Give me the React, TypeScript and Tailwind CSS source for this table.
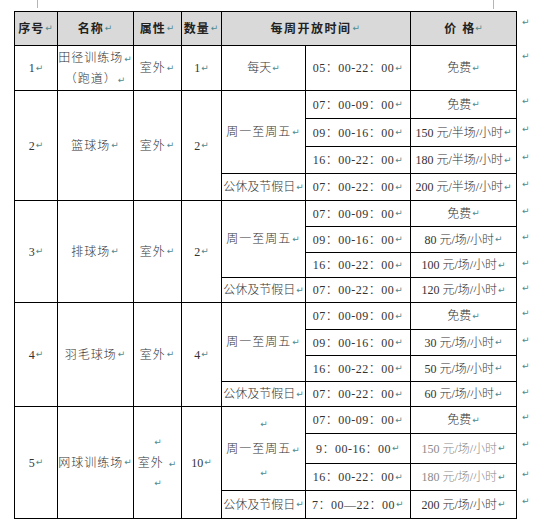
const FONT = { fontFamily: '"Liberation Serif", "Noto Sans CJK SC", serif' }

function Mark() {
  return <span className="ml-[1px] text-[9px] text-[#4d8a8f] font-normal" style={{ fontFamily: '"DejaVu Sans", sans-serif' }}>↵</span>
}

function Cell({ children, className = '' }: { children?: React.ReactNode; className?: string }) {
  return (
    <div className={`bg-white flex flex-col items-center justify-center text-center leading-none whitespace-nowrap ${className}`}>
      {children}
    </div>
  )
}

interface Slot { time: string; price: string }
interface Venue {
  no: string
  name: string
  qty: string
  slots: Slot[]
  holiday: Slot
  padded?: boolean
}

const venues: Venue[] = [
  {
    no: '2', name: '篮球场', qty: '2',
    slots: [
      { time: '07：00-09：00', price: '免费' },
      { time: '09：00-16：00', price: '150 元/半场/小时' },
      { time: '16：00-22：00', price: '180 元/半场/小时' },
    ],
    holiday: { time: '07：00-22：00', price: '200 元/半场/小时' },
  },
  {
    no: '3', name: '排球场', qty: '2',
    slots: [
      { time: '07：00-09：00', price: '免费' },
      { time: '09：00-16：00', price: '80 元/场/小时' },
      { time: '16：00-22：00', price: '100 元/场/小时' },
    ],
    holiday: { time: '07：00-22：00', price: '120 元/场/小时' },
  },
  {
    no: '4', name: '羽毛球场', qty: '4',
    slots: [
      { time: '07：00-09：00', price: '免费' },
      { time: '09：00-16：00', price: '30 元/场/小时' },
      { time: '16：00-22：00', price: '50 元/场/小时' },
    ],
    holiday: { time: '07：00-22：00', price: '60 元/场/小时' },
  },
  {
    no: '5', name: '网球训练场', qty: '10', padded: true,
    slots: [
      { time: '07：00-09：00', price: '免费' },
      { time: '9：00-16：00', price: '150 元/场/小时' },
      { time: '16：00-22：00', price: '180 元/场/小时' },
    ],
    holiday: { time: '7：00—22：00', price: '200 元/场/小时' },
  },
]

const ROWS = 'grid-rows-[33px_44px_27px_27px_26px_26px_25px_25px_24px_24px_26px_25px_25px_24px_26px_29px_26px_27px]'
const HEAD = '!bg-[#d9d9d9] font-bold text-[#222] !flex-row'

export default function App() {
  return (
    <div className="w-[535px] h-[527px] bg-white text-[12px] text-[#333] font-light overflow-hidden" style={FONT}>
      <div className="h-[11px] flex">
        <div className="ml-[37px] w-px h-[8px] bg-[#b5b5b5]" />
        <div className="ml-[455px] w-px h-[9px] bg-[#b5b5b5]" />
      </div>
      <div className="flex">
        <div className={`ml-[14px] grid grid-cols-[42px_75px_47px_39px_83px_104px_105px] ${ROWS} gap-px p-px bg-black`}>
          {['序号', '名称', '属性', '数量'].map(h => (
            <Cell key={h} className={`${HEAD} tracking-[1px]`}>{h}<Mark /></Cell>
          ))}
          <Cell className={`col-span-2 ${HEAD} tracking-[1.5px]`}>每周开放时间<Mark /></Cell>
          <Cell className={HEAD}>价&nbsp;&nbsp;格<Mark /></Cell>

          <Cell className="!flex-row">1<Mark /></Cell>
          <Cell className="gap-[9px] tracking-[1px]">
            <span>田径训练场<Mark /></span>
            <span>（跑道）<Mark /></span>
          </Cell>
          <Cell className="!flex-row tracking-[1px]">室外<Mark /></Cell>
          <Cell className="!flex-row">1<Mark /></Cell>
          <Cell className="!flex-row">每天<Mark /></Cell>
          <Cell className="!flex-row tracking-[0.5px]">05：00-22：00<Mark /></Cell>
          <Cell className="!flex-row">免费<Mark /></Cell>

          {venues.map(v => (
            <>
              <Cell key={v.no + 'a'} className="row-span-4 !flex-row">{v.no}<Mark /></Cell>
              <Cell key={v.no + 'b'} className="row-span-4 !flex-row tracking-[1px]">{v.name}<Mark /></Cell>
              {v.padded ? (
                <Cell key={v.no + 'c'} className="row-span-4 gap-[10px]">
                  <Mark />
                  <span className="tracking-[1px]">室外 <Mark /></span>
                  <Mark />
                </Cell>
              ) : (
                <Cell key={v.no + 'c'} className="row-span-4 !flex-row tracking-[1px]">室外<Mark /></Cell>
              )}
              <Cell key={v.no + 'd'} className="row-span-4 !flex-row">{v.qty}<Mark /></Cell>
              {v.slots.map((s, i) => (
                <>
                  {i === 0 && (
                    v.padded ? (
                      <Cell key={v.no + 'w'} className="row-span-3 gap-[14px]">
                        <Mark />
                        <span className="tracking-[1px]">周一至周五<Mark /></span>
                        <Mark />
                      </Cell>
                    ) : (
                      <Cell key={v.no + 'w'} className="row-span-3 !flex-row tracking-[1px]">周一至周五<Mark /></Cell>
                    )
                  )}
                  <Cell key={v.no + 't' + i} className="!flex-row tracking-[0.5px]">{s.time}<Mark /></Cell>
                  <Cell key={v.no + 'p' + i} className={`!flex-row ${v.padded && i > 0 ? 'text-[#8a8a8a]' : ''}`}>{s.price}<Mark /></Cell>
                </>
              ))}
              <Cell key={v.no + 'h'} className="!flex-row">公休及节假日<Mark /></Cell>
              <Cell key={v.no + 'ht'} className="!flex-row tracking-[0.5px]">{v.holiday.time}<Mark /></Cell>
              <Cell key={v.no + 'hp'} className="!flex-row">{v.holiday.price}<Mark /></Cell>
            </>
          ))}
        </div>
        <div className={`grid ${ROWS} gap-px py-px ml-[4px]`}>
          {Array.from({ length: 18 }).map((_, i) => (
            <div key={i} className="pt-[3px] leading-none"><Mark /></div>
          ))}
        </div>
      </div>
    </div>
  )
}
